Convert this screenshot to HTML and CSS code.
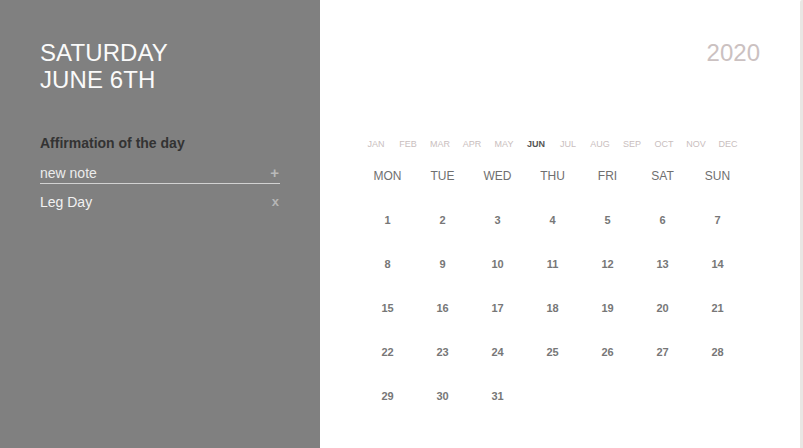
FILE: index.html
```html
<!DOCTYPE html>
<html>
<head>
<meta charset="utf-8">
<link rel="stylesheet" href="styles.css">
</head>
<body>
<div class="app">
  <aside class="side">
    <h1 class="date">SATURDAY<br>JUNE 6TH</h1>
    <h2 class="aff">Affirmation of the day</h2>
    <div class="note-input"><span class="ph">new note</span><span class="plus">+</span></div>
    <div class="note"><span>Leg Day</span><span class="del">x</span></div>
  </aside>
  <main class="main">
    <div class="year">2020</div>
    <div class="cal">
      <div class="months">
        <span>JAN</span><span>FEB</span><span>MAR</span><span>APR</span><span>MAY</span><span class="cur">JUN</span><span>JUL</span><span>AUG</span><span>SEP</span><span>OCT</span><span>NOV</span><span>DEC</span>
      </div>
      <div class="week">
        <span>MON</span><span>TUE</span><span>WED</span><span>THU</span><span>FRI</span><span>SAT</span><span>SUN</span>
      </div>
      <div class="days">
        <span>1</span><span>2</span><span>3</span><span>4</span><span>5</span><span>6</span><span>7</span>
        <span>8</span><span>9</span><span>10</span><span>11</span><span>12</span><span>13</span><span>14</span>
        <span>15</span><span>16</span><span>17</span><span>18</span><span>19</span><span>20</span><span>21</span>
        <span>22</span><span>23</span><span>24</span><span>25</span><span>26</span><span>27</span><span>28</span>
        <span>29</span><span>30</span><span>31</span>
      </div>
    </div>
  </main>
  <div class="strip"></div>
</div>
</body>
</html>
```
FILE: styles.css
```css
html, body {
  margin: 0;
  padding: 0;
  height: 100%;
  font-family: "Liberation Sans", Arial, sans-serif;
}
.app {
  display: flex;
  height: 448px;
  overflow: hidden;
}
.side {
  width: 320px;
  flex: none;
  background: #808080;
  padding: 39px 40px 0 40px;
  box-sizing: border-box;
}
.date {
  margin: 0;
  font-size: 24px;
  line-height: 27px;
  font-weight: normal;
  color: #fafafa;
  letter-spacing: 0.1px;
}
.aff {
  margin: 40px 0 0 0;
  font-size: 14px;
  line-height: 20px;
  font-weight: bold;
  color: #333333;
}
.note-input {
  margin-top: 10px;
  display: flex;
  justify-content: space-between;
  font-size: 14px;
  line-height: 20px;
  border-bottom: 1px solid #d2d2d2;
}
.ph { color: #ececec; }
.plus {
  color: #b9b9b9;
  font-weight: bold;
  font-size: 15px;
  padding-right: 1px;
}
.note {
  margin-top: 8px;
  display: flex;
  justify-content: space-between;
  font-size: 14px;
  line-height: 20px;
  color: #f2f2f2;
}
.del {
  color: #b5b5b5;
  font-weight: bold;
  font-size: 13px;
  padding-right: 1px;
}
.main {
  flex: 1;
  background: #ffffff;
  padding: 39px 40px 0 40px;
  box-sizing: border-box;
}
.year {
  text-align: right;
  font-size: 24px;
  line-height: 27px;
  color: #cbc1c1;
}
.cal {
  width: 385px;
  margin-top: 68px;
}
.months {
  display: grid;
  grid-template-columns: repeat(12, 32px);
  font-size: 9px;
  line-height: 20px;
  color: #c9bebe;
  text-align: center;
}
.months .cur {
  color: #555555;
  font-weight: bold;
}
.week {
  display: grid;
  grid-template-columns: repeat(7, 55px);
  font-size: 12px;
  line-height: 44px;
  color: #6f6f6f;
  text-align: center;
}
.days {
  display: grid;
  grid-template-columns: repeat(7, 55px);
  grid-auto-rows: 44px;
  font-size: 11px;
  line-height: 44px;
  font-weight: bold;
  color: #777777;
  text-align: center;
}
.strip {
  width: 3px;
  flex: none;
  background: #e9e7e4;
  border-top-left-radius: 2px;
}
```
